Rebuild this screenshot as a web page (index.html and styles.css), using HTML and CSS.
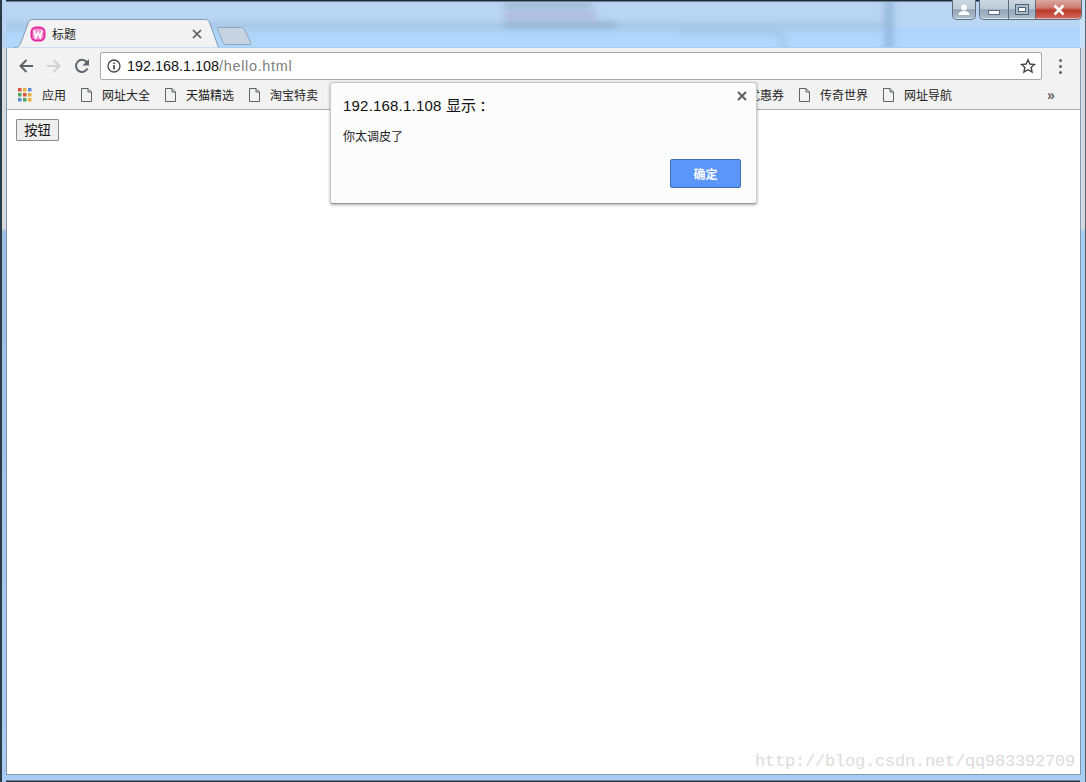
FILE: index.html
```html
<!DOCTYPE html>
<html lang="zh-CN">
<head>
<meta charset="utf-8">
<title>标题</title>
<link rel="stylesheet" href="styles.css">
</head>
<body>
<div class="window">
  <div class="backdrop">
    <span class="blur blur-band"></span>
    <span class="blur blur-a"></span>
    <span class="blur blur-b"></span>
    <span class="blur blur-c"></span>
    <span class="blur blur-d"></span>
    <span class="blur blur-e"></span>
  </div>
  <span class="edge edge-left"></span>
  <span class="edge edge-right"></span>
  <div class="controls">
    <div class="ctl ctl-user">
      <svg width="14" height="12" viewBox="0 0 14 12"><circle cx="7" cy="3.500" r="3" fill="#fff"/><path d="M1.500 11c0-3 2.500-4 5.500-4s5.500 1 5.500 4z" fill="#fff"/></svg>
    </div>
    <div class="ctl-group">
      <div class="ctl ctl-min"><span class="min-glyph"></span></div>
      <div class="ctl ctl-max"><span class="max-glyph"></span></div>
      <div class="ctl ctl-close">
        <svg width="14" height="12" viewBox="0 0 14 12"><path d="M2.500 1.500l9 9M11.500 1.500l-9 9" stroke="#fff" stroke-width="2.600" fill="none"/></svg>
      </div>
    </div>
  </div>
  <div class="tabstrip">
    <div class="tab">
      <svg class="tab-shape" width="206" height="29" viewBox="0 0 206 29"><path d="M0.500 28.500c3 0 5-1 6-4l8-21c.7-2 2-3 4-3h173c2 0 3.300 1 4 3l9 25" fill="#f2f2f2" stroke="#8199b2"/></svg>
      <svg class="favicon" width="16" height="16" viewBox="0 0 16 16"><rect x="0.500" y="0.500" width="15" height="15" rx="5.500" fill="#e6259e"/><rect x="2.500" y="2.500" width="11" height="11" rx="3" fill="#f290d0"/><path d="M4 4.500l1.800 7 2.200-5 2.200 5 1.800-7" stroke="#fff" stroke-width="1.700" fill="none"/></svg>
      <span class="tab-title">标题</span>
      <svg class="tab-close" width="10" height="10" viewBox="0 0 10 10"><path d="M1 1l8 8M9 1l-8 8" stroke="#5a5a5a" stroke-width="1.700" fill="none"/></svg>
    </div>
    <svg class="newtab" width="36" height="19" viewBox="0 0 36 19"><path d="M1.500 1.500h23c1.500 0 2.300.6 3 2l6.500 13.500c.3.800 0 1.500-1 1.500h-24c-1.500 0-2.300-.6-3-2l-5.500-13.500c-.3-.8.200-1.500 1-1.500z" fill="#c6d3e1" stroke="#8ea5bb"/></svg>
  </div>
  <div class="browser">
    <div class="toolbar">
      <svg class="nav" width="16" height="16" viewBox="0 0 16 16"><path d="M15 8H2.500M8.500 2l-6 6 6 6" stroke="#5f6368" stroke-width="2" fill="none"/></svg>
      <svg class="nav" width="16" height="16" viewBox="0 0 16 16"><path d="M1 8h12.500M7.500 2l6 6-6 6" stroke="#cfd1d3" stroke-width="2" fill="none"/></svg>
      <svg class="nav" width="16" height="16" viewBox="0 0 16 16"><path d="M13.400 10.500A6 6 0 1 1 12.600 4" stroke="#5f6368" stroke-width="2" fill="none"/><path d="M15 1v6.500H8.500z" fill="#5f6368"/></svg>
      <div class="omnibox">
        <svg width="14" height="14" viewBox="0 0 14 14"><circle cx="7" cy="7" r="6" stroke="#444" stroke-width="1.300" fill="none"/><rect x="6.200" y="6" width="1.600" height="4.500" fill="#444"/><rect x="6.200" y="3.400" width="1.600" height="1.600" fill="#444"/></svg>
        <span class="url"><span class="url-host">192.168.1.108</span><span class="url-path">/hello.html</span></span>
        <svg class="star" width="16" height="16" viewBox="0 0 16 16"><path d="M8 1.800l1.900 4.200 4.600.5-3.400 3.100 1 4.500L8 11.700l-4.100 2.400 1-4.500L1.500 6.500l4.600-.5z" stroke="#444" stroke-width="1.400" fill="none"/></svg>
      </div>
      <div class="kebab"><i></i><i></i><i></i></div>
    </div>
    <div class="bookmarks">
      <div class="bm bm-apps">
        <svg width="14" height="14" viewBox="0 0 14 14">
          <rect width="3.500" height="3.500" fill="#e0533f"/><rect x="5" width="3.500" height="3.500" fill="#e8b23a"/><rect x="10" width="3.500" height="3.500" fill="#5b8dd9"/>
          <rect y="5" width="3.500" height="3.500" fill="#4aa564"/><rect x="5" y="5" width="3.500" height="3.500" fill="#e0533f"/><rect x="10" y="5" width="3.500" height="3.500" fill="#e8b23a"/>
          <rect y="10" width="3.500" height="3.500" fill="#5b8dd9"/><rect x="5" y="10" width="3.500" height="3.500" fill="#4aa564"/><rect x="10" y="10" width="3.500" height="3.500" fill="#e8b23a"/>
        </svg>
        <span>应用</span>
      </div>
      <div class="bm"><svg class="page" width="11" height="14" viewBox="0 0 11 14"><path d="M.500.500h6.500l3.500 3.500v9.500H.500zM7 .500V4h3.500" stroke="#5f6368" fill="none"/></svg><span>网址大全</span></div>
      <div class="bm"><svg class="page" width="11" height="14" viewBox="0 0 11 14"><path d="M.500.500h6.500l3.500 3.500v9.500H.500zM7 .500V4h3.500" stroke="#5f6368" fill="none"/></svg><span>天猫精选</span></div>
      <div class="bm"><svg class="page" width="11" height="14" viewBox="0 0 11 14"><path d="M.500.500h6.500l3.500 3.500v9.500H.500zM7 .500V4h3.500" stroke="#5f6368" fill="none"/></svg><span>淘宝特卖</span></div>
      <div class="bm-gap"></div>
      <div class="bm"><span>优惠券</span></div>
      <div class="bm"><svg class="page" width="11" height="14" viewBox="0 0 11 14"><path d="M.500.500h6.500l3.500 3.500v9.500H.500zM7 .500V4h3.500" stroke="#5f6368" fill="none"/></svg><span>传奇世界</span></div>
      <div class="bm"><svg class="page" width="11" height="14" viewBox="0 0 11 14"><path d="M.500.500h6.500l3.500 3.500v9.500H.500zM7 .500V4h3.500" stroke="#5f6368" fill="none"/></svg><span>网址导航</span></div>
      <span class="more">»</span>
    </div>
    <div class="content">
      <button class="page-btn" type="button">按钮</button>
    </div>
  </div>
  <div class="dialog">
    <svg class="dialog-close" width="10" height="10" viewBox="0 0 10 10"><path d="M1 1l8 8M9 1l-8 8" stroke="#5f5f5f" stroke-width="2" fill="none"/></svg>
    <div class="dialog-title">192.168.1.108 显示<span class="colon">：</span></div>
    <div class="dialog-msg">你太调皮了</div>
    <div class="dialog-actions"><button class="ok" type="button">确定</button></div>
  </div>
  <div class="watermark">http://blog.csdn.net/qq983392709</div>
</div>
</body>
</html>
```

FILE: styles.css
```css
* { box-sizing: border-box; }
html, body { margin: 0; padding: 0; background: #fff; }
body { font-family: "Noto Sans CJK SC", "Liberation Sans", sans-serif; }

.window {
  position: relative;
  width: 1086px;
  height: 782px;
  overflow: hidden;
  display: flex;
  flex-direction: column;
  padding: 0 5px 7px 6px;
  background:
    linear-gradient(to bottom, #1d2a33 0, #1d2a33 1px, #b8d4f2 2px, #b9d6f5 24px, #add3f8 30px, #b2d9fb 46px, #a9cdf2 47px, #a9cdf2 780px, #2a3640 781px);
}
.edge { position: absolute; display: block; }
.edge-left { left: 0; top: 0; bottom: 0; width: 6px; border-left: 2px solid #2a3a46; background: linear-gradient(to bottom, #b8d4f2 0, #b8d4f2 47px, #d6dade 48px, #d6dade 228px, #9dbde2 232px, #a9cdf2 100%); }
.edge-right { right: 0; top: 0; bottom: 0; width: 6px; border-right: 1px solid #55626e; background: linear-gradient(to bottom, #c9e0f6 0, #c9e0f6 47px, #d6dade 48px, #d6dade 228px, #a9cdf2 232px, #a9cdf2 100%); }

.backdrop { position: absolute; left: 0; right: 0; top: 2px; height: 45px; overflow: hidden; }
.blur { position: absolute; display: block; filter: blur(3px); }
.blur-band { left: -10px; top: 21px; width: 900px; height: 4px; background: #94b3d2; opacity: .75; }
.blur-a { left: 504px; top: 1px; width: 88px; height: 5px; background: #8aa0b8; opacity: .75; }
.blur-b { left: 504px; top: 11px; width: 92px; height: 5px; background: #a79cc0; opacity: .75; }
.blur-c { left: 504px; top: 21px; width: 112px; height: 4px; background: #809ab4; opacity: .75; }
.blur-d { left: 884px; top: -4px; width: 10px; height: 60px; background: #90b4d8; opacity: .75; }
.blur-e { left: 680px; top: 27px; width: 105px; height: 22px; border-top: 4px solid #8fa9c2; border-right: 5px solid #8fa9c2; border-radius: 0 10px 0 0; opacity: .4; }

.controls { position: absolute; top: 0; left: 952px; display: flex; gap: 3px; z-index: 2; }
.ctl-group { display: flex; }
.ctl {
  height: 20px;
  display: flex;
  align-items: center;
  justify-content: center;
  border: 1px solid #5d6d7c;
  border-top: 0;
  background: linear-gradient(to bottom, #ccd7e2 0, #bcc9d6 45%, #94a6b8 52%, #aebfce 100%);
  box-shadow: inset 0 -1px 0 #dde6ee;
}
.ctl-user { width: 24px; border-radius: 0 0 5px 5px; }
.ctl-min { width: 29px; border-radius: 0 0 0 5px; border-right: 0; }
.ctl-max { width: 27px; border-right: 0; }
.ctl-close {
  width: 47px;
  border-radius: 0 0 5px 0;
  background: linear-gradient(to bottom, #d9a8a0 0, #cf7c6e 40%, #bd3a2a 55%, #cf6a5c 100%);
  box-shadow: inset 0 -1px 0 #e3b5ad;
}
.min-glyph { width: 12px; height: 5px; margin-top: 6px; border: 1px solid #5d6f80; background: #fff; }
.max-glyph { width: 14px; height: 11px; border: 1px solid #4f6172; background: #fff; box-shadow: inset 0 0 0 2px #a9bbcd, inset 0 0 0 3px #4f6172; }

.tabstrip {
  position: relative;
  height: 48px;
  flex: none;
  display: flex;
  align-items: flex-end;
}
.tab {
  position: relative;
  width: 206px;
  height: 29px;
  margin-left: 8px;
  padding-left: 16px;
  display: flex;
  align-items: center;
  flex: none;
  z-index: 1;
}
.tab-shape { position: absolute; left: 0; top: 0; }
.favicon { position: relative; flex: none; }
.tab-title { position: relative; margin-left: 6px; font-size: 12px; line-height: 16px; color: #222; width: 140px; flex: none; }
.tab-close { position: relative; flex: none; }
.newtab { flex: none; margin: 0 0 3px -3px; position: relative; }

.browser {
  position: relative;
  flex: 1;
  min-height: 0;
  display: flex;
  flex-direction: column;
  background: #fff;
  border: 1px solid #7f99b5;
  border-top: 0;
}
.toolbar {
  height: 36px;
  flex: none;
  display: flex;
  align-items: center;
  padding: 0 11px 0 11px;
  background: #f2f2f2;
}
.nav { flex: none; margin-right: 12px; }
.omnibox {
  flex: none;
  width: 942px;
  height: 28px;
  margin-left: -2px;
  padding: 0 5px 0 6px;
  display: flex;
  align-items: center;
  background: #fff;
  border: 1px solid #a9a9a9;
  border-radius: 2px;
}
.url { flex: 1; margin-left: 6px; font-family: "Liberation Sans", sans-serif; font-size: 14.400px; white-space: nowrap; }
.url-host { color: #111; }
.url-path { color: #808080; letter-spacing: .7px; }
.star { flex: none; }
.kebab { flex: none; margin-left: 17px; display: flex; flex-direction: column; gap: 3px; }
.kebab i { display: block; width: 3px; height: 3px; border-radius: 50%; background: #5f6368; }

.bookmarks {
  height: 26px;
  flex: none;
  display: flex;
  align-items: center;
  padding: 0 0 3px 11px;
  background: #f2f2f2;
  border-bottom: 1px solid #ababab;
  font-size: 12px;
  color: #222;
}
.bm { display: flex; align-items: center; flex: none; margin-right: 15px; }
.bm-apps svg { margin-right: 10px; }
.bm .page { margin-right: 10px; }
.bm span { line-height: 16px; white-space: nowrap; }
.bm-gap { width: 415px; flex: none; }
.more { margin-left: 80px; font-family: "Liberation Sans", sans-serif; font-size: 14px; font-weight: 700; color: #666; line-height: 16px; }

.content { flex: 1; background: #fff; padding: 9px 0 0 9px; }
.page-btn {
  display: block;
  width: 43px;
  height: 22px;
  padding: 0;
  font-family: "Noto Sans CJK SC", sans-serif;
  font-size: 13.300px;
  line-height: 18px;
  color: #111;
  background: #efefef;
  border: 1px solid #8a8a8a;
  border-radius: 1px;
}

.dialog {
  position: absolute;
  left: 330px;
  top: 82px;
  width: 427px;
  height: 122px;
  padding: 12px 15px 15px 12px;
  display: flex;
  flex-direction: column;
  background: #fcfcfc;
  border-radius: 3px;
  border: 1px solid #c9c9c9;
  border-bottom-color: #9a9a9a;
  box-shadow: 0 1px 3px rgba(0,0,0,.35);
  z-index: 3;
}
.dialog-close { position: absolute; right: 9px; top: 8px; }
.dialog-title { font-family: "Liberation Sans", "Noto Sans CJK SC", sans-serif; font-size: 15px; letter-spacing: .2px; line-height: 20px; color: #111; }
.colon { margin-left: 3px; font-family: "Noto Sans CJK SC", sans-serif; }
.dialog-msg { margin-top: 11px; font-size: 12px; line-height: 17px; color: #222; }
.dialog-actions { margin-top: auto; display: flex; justify-content: flex-end; }
.ok {
  width: 71px;
  height: 29px;
  padding: 0;
  font-family: "Noto Sans CJK SC", sans-serif;
  font-size: 12px;
  font-weight: 700;
  color: #fff;
  background: #5d96fb;
  border: 1px solid #3f6db3;
  border-radius: 2px;
}

.watermark {
  position: absolute;
  left: 755px;
  top: 751px;
  font-family: "Liberation Mono", monospace;
  font-size: 17px;
  letter-spacing: -.2px;
  line-height: 22px;
  white-space: nowrap;
  color: #dcdcdc;
  z-index: 2;
}
```
